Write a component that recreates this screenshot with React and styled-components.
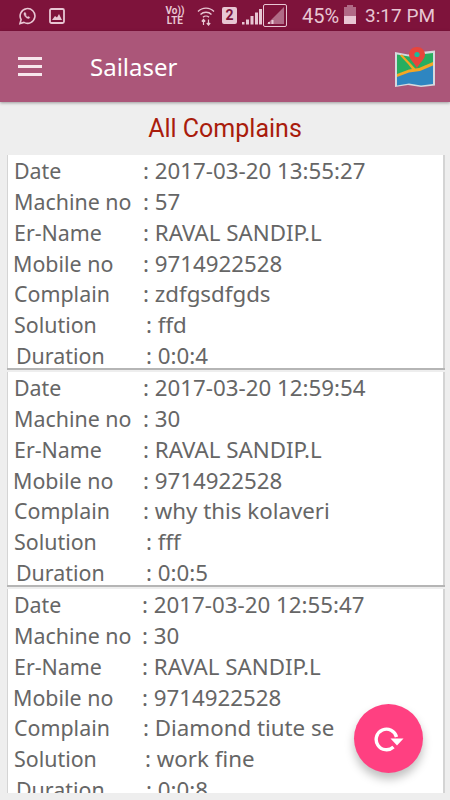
import React from 'react';
import styled, { createGlobalStyle } from 'styled-components';

const GlobalStyle = createGlobalStyle`
  html, body { margin: 0; padding: 0; background: #eeeeee; }
  * { box-sizing: border-box; }
`;

const complains = [
  {
    rows: [
      ['Date', '2017-03-20 13:55:27', 14, 143],
      ['Machine no', '57', 14, 143],
      ['Er-Name', 'RAVAL SANDIP.L', 14, 143],
      ['Mobile no', '9714922528', 13, 143],
      ['Complain', 'zdfgsdfgds', 14, 143],
      ['Solution', 'ffd', 14, 146],
      ['Duration', '0:0:4', 16, 146],
    ],
  },
  {
    rows: [
      ['Date', '2017-03-20 12:59:54', 14, 143],
      ['Machine no', '30', 14, 143],
      ['Er-Name', 'RAVAL SANDIP.L', 14, 143],
      ['Mobile no', '9714922528', 13, 143],
      ['Complain', 'why this kolaveri', 14, 143],
      ['Solution', 'fff', 14, 146],
      ['Duration', '0:0:5', 16, 146],
    ],
  },
  {
    rows: [
      ['Date', '2017-03-20 12:55:47', 14, 142],
      ['Machine no', '30', 14, 142],
      ['Er-Name', 'RAVAL SANDIP.L', 14, 142],
      ['Mobile no', '9714922528', 13, 142],
      ['Complain', 'Diamond tiute se', 14, 143],
      ['Solution', 'work fine', 14, 145],
      ['Duration', '0:0:8', 16, 146],
    ],
  },
];

function App() {
  return (
    <Page>
      <GlobalStyle />
      <StatusBar>
        <StatusGroup>
          <svg width="18" height="18" viewBox="0 0 18 18" fill="none" stroke="#e8c6d3" strokeWidth="1.6">
            <path d="M2 16.500l1.100-3.900a7.400 7.400 0 1 1 2.800 2.800z" />
            <path d="M6.400 5.600c-.8.900-.6 2.400.7 4s2.900 2.400 4 1.800l.8-1-1.600-1-.7.600c-.9-.4-1.600-1.200-2-2.100l.6-.7-.9-1.600z" fill="#e8c6d3" strokeWidth="0.4" />
          </svg>
          <svg width="16" height="16" viewBox="0 0 16 16">
            <rect x="1" y="1" width="14" height="14" rx="1.500" fill="none" stroke="#e8c6d3" strokeWidth="1.800" />
            <path d="M3 12l3-4 2 1.500L10 6l3 6z" fill="#e8c6d3" />
          </svg>
        </StatusGroup>
        <StatusRight>
          <VolteMark>
            <span>Vo))</span>
            <span>LTE</span>
          </VolteMark>
          <svg width="18" height="20" viewBox="0 0 18 20" fill="none" stroke="#e8c6d3" strokeWidth="1.400">
            <path d="M1 5.500c4.500-4.500 11.500-4.500 16 0" />
            <path d="M3.500 8.500c3-3 8-3 11 0" />
            <path d="M6 11.200c1.600-1.500 4.400-1.500 6 0" />
            <path d="M6.500 19v-5M4.800 15.500l1.700-2 1.700 2M11.500 13.500v5M9.800 17l1.700 2 1.700-2" strokeWidth="1.200" />
          </svg>
          <SimBadge>2</SimBadge>
          <svg width="20" height="18" viewBox="0 0 20 18" fill="#e8c6d3">
            <path d="M0 15h2.500v2.500H0zM4 12.500h3v5H4zM8.500 9h3v8.500h-3zM13 5.500h3v12h-3zM17 2h3v15.500h-3z" />
          </svg>
          <SignalBox>
            <svg width="22" height="21" viewBox="0 0 22 21">
              <path d="M20 2v17H3z" fill="#b06a86" />
              <path d="M4 17h2v2H4zM7.500 15h2v4h-2z" fill="#e8c6d3" />
            </svg>
          </SignalBox>
          <BatteryText>45%</BatteryText>
          <Battery>
            <BatteryFill />
          </Battery>
          <Clock>3:17 PM</Clock>
        </StatusRight>
      </StatusBar>
      <AppBar>
        <MenuIcon>
          <span />
          <span />
          <span />
        </MenuIcon>
        <AppTitle>Sailaser</AppTitle>
        <svg width="42" height="42" viewBox="0 0 42 42">
          <path d="M1 6l13 2.500L27 6l14-1.500v35l-14 1.500-13-2-13 2z" fill="#d5d9de" />
          <path d="M3 8.500l12 2 11-2 13-1.500v22l-13 3-11-2-12 3z" fill="#27ae60" />
          <path d="M3 28l12-3 12-2 12-5v20l-12 1.500-12-2-12 2z" fill="#2e86c1" />
          <path d="M3 28l12-4.500 10-1.500 14-6v3.500l-13 5.500-11 1.500-12 4.500z" fill="#f5a623" />
          <path d="M8 8.500l9 9.500 6 6.500-3.500.5-5.500-7-8-8.500z" fill="#f5a623" />
          <path d="M23 1c-4.700 0-8 3.500-8 7.500 0 4.800 5.500 8.500 8 13.500 2.500-5 8-8.700 8-13.500C31 4.500 27.700 1 23 1z" fill="#e8453c" />
          <circle cx="23" cy="8.500" r="2.600" fill="#1abc9c" />
        </svg>
      </AppBar>
      <Heading>All Complains</Heading>
      <CardList>
        {complains.map((complain, i) => (
          <Card key={i}>
            {complain.rows.map(([label, value, indent, colonAt]) => (
              <Row key={label} $indent={indent}>
                <Label $width={colonAt - indent}>{label}</Label>
                <Value>: {value}</Value>
              </Row>
            ))}
          </Card>
        ))}
      </CardList>
      <Fab>
        <svg width="30" height="26" viewBox="0 0 30 26" fill="none" stroke="#fff" strokeWidth="3.400">
          <path d="M22.500 11A10.300 10.300 0 1 0 19.500 21" />
          <path d="M16.500 12.500h13L23 19.500z" fill="#fff" stroke="none" />
        </svg>
      </Fab>
    </Page>
  );
}

const Page = styled.div`
  position: relative;
  width: 450px;
  height: 800px;
  overflow: hidden;
  display: flex;
  flex-direction: column;
  background: #eeeeee;
  font-family: "Noto Sans", "Open Sans", sans-serif;
`;

const StatusBar = styled.div`
  height: 31px;
  flex: none;
  background: #7e133b;
  color: #e8c6d3;
  display: flex;
  align-items: center;
  justify-content: space-between;
  padding: 0 15px 0 18px;
`;

const StatusGroup = styled.div`
  display: flex;
  align-items: center;
  gap: 13px;
`;

const StatusRight = styled.div`
  display: flex;
  align-items: center;
`;

const VolteMark = styled.div`
  display: flex;
  flex-direction: column;
  align-items: center;
  width: 18px;
  margin-right: 13px;
  font-family: "Roboto", sans-serif;
  font-size: 10px;
  font-weight: 700;
  line-height: 10px;
`;

const SimBadge = styled.div`
  width: 15px;
  height: 17px;
  margin: 0 5px 0 7px;
  border-radius: 2px;
  background: #e8c6d3;
  color: #7e133b;
  font-family: "Roboto", sans-serif;
  font-size: 14px;
  font-weight: 700;
  line-height: 17px;
  text-align: center;
`;

const SignalBox = styled.div`
  width: 24px;
  height: 23px;
  margin-left: 1px;
  border: 1px solid #e8c6d3;
  border-radius: 2px;
  display: flex;
`;

const BatteryText = styled.div`
  margin-left: 15px;
  font-family: "Roboto", sans-serif;
  font-size: 20px;
`;

const Battery = styled.div`
  position: relative;
  width: 12px;
  height: 17px;
  margin-left: 5px;
  background: #b06a86;
  display: flex;
  align-items: flex-end;
  &::before {
    content: '';
    position: absolute;
    top: -2px;
    left: 3px;
    width: 6px;
    height: 2px;
    background: #b06a86;
  }
`;

const BatteryFill = styled.div`
  width: 100%;
  height: 8px;
  background: #e8c6d3;
`;

const Clock = styled.div`
  margin-left: 9px;
  font-family: "Roboto", sans-serif;
  font-size: 19px;
`;

const AppBar = styled.div`
  height: 71px;
  flex: none;
  background: #ab5679;
  box-shadow: 0 1px 3px rgba(0, 0, 0, 0.35);
  display: flex;
  align-items: center;
  padding: 0 14px 0 18px;
  z-index: 1;
`;

const MenuIcon = styled.div`
  width: 24px;
  display: flex;
  flex-direction: column;
  gap: 5px;
  span {
    height: 3px;
    background: #f7e6ed;
  }
`;

const AppTitle = styled.div`
  flex: 1;
  margin-left: 48px;
  color: #ffffff;
  font-size: 24px;
`;

const Heading = styled.div`
  height: 53px;
  flex: none;
  color: #a91c0c;
  font-family: "Roboto", sans-serif;
  font-size: 25px;
  line-height: 53px;
  text-align: center;
`;

const CardList = styled.div`
  flex: 1;
  min-height: 0;
  margin: 0 5px 7px 7px;
  overflow: hidden;
  display: flex;
  flex-direction: column;
  gap: 2px;
`;

const Card = styled.div`
  flex: none;
  height: 215px;
  padding-top: 0.6px;
  background: #ffffff;
  border-bottom: 2px solid #b5b5b5;
  box-shadow: inset 1px 0 0 #d4d4d4, inset -2px 0 0 #d4d4d4;
`;

const Row = styled.div`
  height: 30.7px;
  display: flex;
  align-items: center;
  padding-left: ${(p) => p.$indent - 7}px;
  color: #666666;
  font-size: 21.4px;
  white-space: nowrap;
`;

const Label = styled.div`
  flex: none;
  width: ${(p) => p.$width}px;
`;

const Value = styled.div`
  flex: 1;
  font-size: 22.3px;
`;

const Fab = styled.div`
  position: absolute;
  left: 354px;
  top: 704px;
  width: 69px;
  height: 69px;
  border-radius: 50%;
  background: #ff4081;
  box-shadow: 0 6px 10px rgba(0, 0, 0, 0.25);
  display: flex;
  align-items: center;
  justify-content: center;
`;

export default App;
